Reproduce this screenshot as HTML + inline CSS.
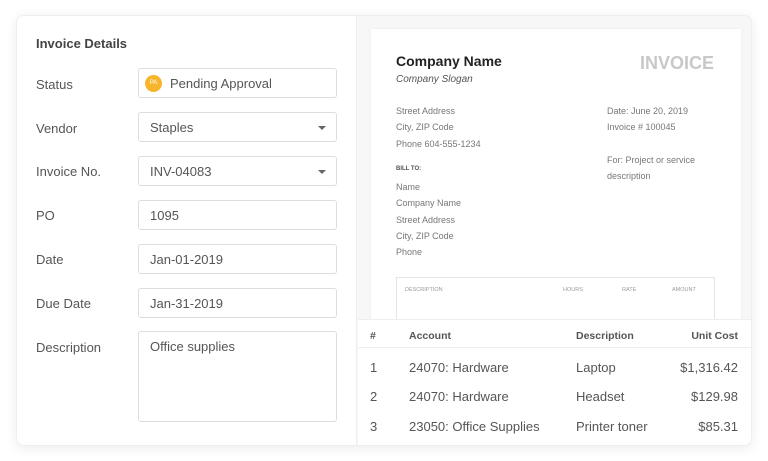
<!DOCTYPE html>
<html><head><style>
*{box-sizing:border-box;margin:0;padding:0}
body{width:768px;height:461px;background:#fff;font-family:"Liberation Sans",sans-serif;position:relative;overflow:hidden}
.card{position:absolute;left:16px;top:15px;width:736px;height:431px;border-radius:8px;background:#f7f7f7;box-shadow:0 2px 12px rgba(0,0,0,.08);overflow:hidden;border:1px solid #eee}
.left{position:absolute;left:0;top:0;width:340px;height:431px;background:#fff;border-right:1px solid #eee}
.h{position:absolute;left:19px;top:20px;font-size:13px;font-weight:bold;color:#444}
.lb{position:absolute;left:19px;font-size:13px;color:#555}
.in{position:absolute;left:121px;width:199px;height:30px;border:1px solid #ddd;border-radius:3px;font-size:13px;color:#555;padding:7px 11px}
.caret{position:absolute;right:10px;top:13px;border-left:4px solid transparent;border-right:4px solid transparent;border-top:4px solid #666}
.paper{position:absolute;left:354px;top:13px;width:370px;height:320px;background:#fff;box-shadow:0 0 3px rgba(0,0,0,.05)}
.p{position:absolute;font-size:9px;color:#777;line-height:16.3px}
.tbl{position:absolute;left:341px;top:303px;width:395px;height:128px;background:#fff;border-top:1px solid #eee}
.t{position:absolute;font-size:13px;color:#555}
.th{position:absolute;font-size:10.5px;font-weight:bold;color:#555;top:10px}
</style></head><body>
<div class="card">
<div class="left">
<div class="h">Invoice Details</div>
<div class="lb" style="top:61px">Status</div>
<div class="in" style="top:52px;padding-left:31px"><span style="position:absolute;left:6px;top:6px;width:17px;height:17px;border-radius:50%;background:#f7b52c;color:#fff;font-size:6px;text-align:center;line-height:17px">PA</span>Pending Approval</div>
<div class="lb" style="top:105px">Vendor</div>
<div class="in" style="top:96px">Staples<span class="caret"></span></div>
<div class="lb" style="top:148px">Invoice No.</div>
<div class="in" style="top:140px">INV-04083<span class="caret"></span></div>
<div class="lb" style="top:192px">PO</div>
<div class="in" style="top:184px">1095</div>
<div class="lb" style="top:236px">Date</div>
<div class="in" style="top:228px">Jan-01-2019</div>
<div class="lb" style="top:280px">Due Date</div>
<div class="in" style="top:272px">Jan-31-2019</div>
<div class="lb" style="top:324px">Description</div>
<div class="in" style="top:315px;height:91px">Office supplies</div>
</div>
<div class="paper">
<div style="position:absolute;left:25px;top:24px;font-size:14px;font-weight:bold;color:#222">Company Name</div>
<div style="position:absolute;left:25px;top:45px;font-size:10px;font-style:italic;color:#555">Company Slogan</div>
<div style="position:absolute;right:27px;top:24px;font-size:18px;font-weight:bold;color:#c8c8c8">INVOICE</div>
<div class="p" style="left:25px;top:74px">Street Address<br>City, ZIP Code<br>Phone 604-555-1234</div>
<div class="p" style="left:236px;top:74px">Date: June 20, 2019<br>Invoice # 100045<br><div style="height:16px"></div>For: Project or service<br>description</div>
<div style="position:absolute;left:25px;top:137px;font-size:6px;font-weight:bold;color:#555">BILL TO:</div>
<div class="p" style="left:25px;top:150px">Name<br>Company Name<br>Street Address<br>City, ZIP Code<br>Phone</div>
<div style="position:absolute;left:25px;top:248px;width:319px;height:80px;border:1px solid #e4e4e4;font-size:5.5px;color:#999">
<span style="position:absolute;left:8px;top:9px">DESCRIPTION</span><span style="position:absolute;left:166px;top:9px">HOURS</span><span style="position:absolute;left:225px;top:9px">RATE</span><span style="position:absolute;left:275px;top:9px">AMOUNT</span></div>
</div>
<div class="tbl">
<div class="th" style="left:12px">#</div>
<div class="th" style="left:51px">Account</div>
<div class="th" style="left:218px">Description</div>
<div class="th" style="right:15px">Unit Cost</div>
<div style="position:absolute;left:0;right:0;top:27px;border-top:1px solid #eee"></div>
<div class="t" style="left:12px;top:40px">1</div><div class="t" style="left:51px;top:40px">24070: Hardware</div><div class="t" style="left:218px;top:40px">Laptop</div><div class="t" style="right:15px;top:40px">$1,316.42</div>
<div class="t" style="left:12px;top:69px">2</div><div class="t" style="left:51px;top:69px">24070: Hardware</div><div class="t" style="left:218px;top:69px">Headset</div><div class="t" style="right:15px;top:69px">$129.98</div>
<div class="t" style="left:12px;top:99px">3</div><div class="t" style="left:51px;top:99px">23050: Office Supplies</div><div class="t" style="left:218px;top:99px">Printer toner</div><div class="t" style="right:15px;top:99px">$85.31</div>
</div>
</div>
</body></html>
